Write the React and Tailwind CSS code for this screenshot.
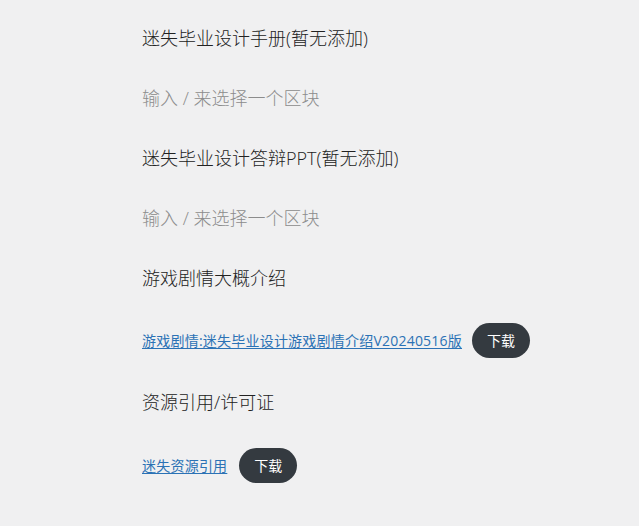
const font = { fontFamily: '"Open Sans", "Noto Sans CJK SC", sans-serif' };

function Heading({ children }) {
  return <h3 className="h-[60px] flex items-center text-[18px] font-light text-[#222]">{children}</h3>;
}

function Placeholder() {
  return <p className="h-[60px] flex items-center text-[18px] font-light text-[#8c8c8c]">输入 / 来选择一个区块</p>;
}

function FileRow({ label, gap }) {
  return (
    <div className="flex items-center h-[64px]">
      <a href="#" className="text-[14px] tracking-[0.22px] text-[#2b72b5] underline underline-offset-2">
        {label}
      </a>
      <button className={`${gap} h-[35px] w-[58px] rounded-full bg-[#343a40] text-white text-[14px]`}>
        下载
      </button>
    </div>
  );
}

export default function App() {
  return (
    <div className="min-h-[526px] bg-[#f0f0f1] pl-[142px] pt-[8px]" style={font}>
      <Heading>迷失毕业设计手册(暂无添加)</Heading>
      <Placeholder />
      <Heading>迷失毕业设计答辩PPT(暂无添加)</Heading>
      <Placeholder />
      <Heading>游戏剧情大概介绍</Heading>
      <FileRow label="游戏剧情:迷失毕业设计游戏剧情介绍V20240516版" gap="ml-[10px]" />
      <div className="h-[61px] flex items-center text-[18px] font-light text-[#222]">资源引用/许可证</div>
      <FileRow label="迷失资源引用" gap="ml-[12px]" />
    </div>
  );
}
